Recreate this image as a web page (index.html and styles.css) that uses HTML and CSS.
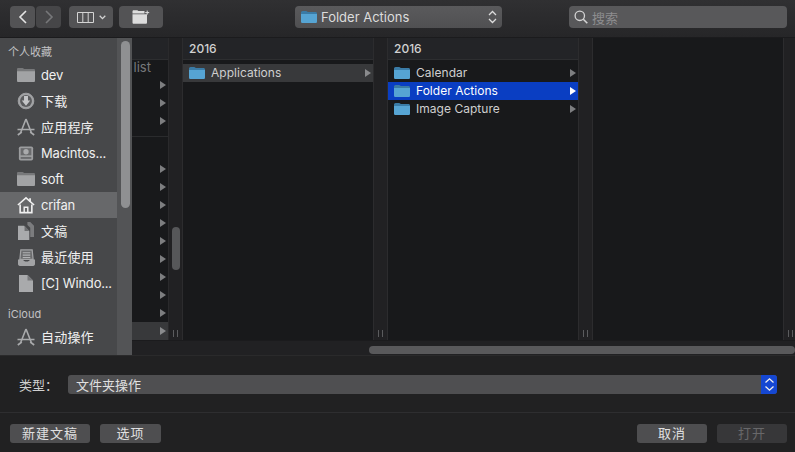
FILE: index.html
```html
<!DOCTYPE html>
<html lang="zh">
<head>
<meta charset="utf-8">
<title>Open</title>
<link rel="stylesheet" href="styles.css">
</head>
<body>
<svg class="defs" width="0" height="0">
  <symbol id="blue-folder" viewBox="0 0 16 12"><path d="M0 1.800C0 .7.700 0 1.600 0h3.600c.8 0 1 .9 1.800.9h7.400c1 0 1.600.6 1.600 1.500V4H0z" fill="#3a7ba6"/><path d="M0 3h16v7.500c0 1-.6 1.500-1.600 1.500H1.600C.6 12 0 11.500 0 10.500z" fill="#56a4d3"/></symbol>
  <symbol id="gray-folder" viewBox="0 0 18 14"><path d="M0 1.400C0 .5.500 0 1.300 0h4.300c.9 0 .9 1 1.800 1h9.300c.8 0 1.300.5 1.300 1.300V4H0z" fill="#77787a"/><path d="M0 3.200h18v9.500c0 .8-.5 1.300-1.300 1.300H1.300C.5 14 0 13.500 0 12.700z" fill="#a2a3a5"/></symbol>
  <symbol id="apps" viewBox="0 0 18 18"><path d="M9 1 3.500 15M9 1l5.500 14M.5 11.500h17M.8 17l4-3M17.200 17l-4-3" fill="none" stroke="#a9aaac" stroke-width="1.600"/></symbol>
</svg>
<div class="window">
  <header class="toolbar">
    <div class="btn-group">
      <button class="tb nav" aria-label="后退"><svg width="10" height="14" viewBox="0 0 10 14"><path d="M8 1 2 7l6 6" fill="none" stroke="#e4e4e4" stroke-width="1.600"/></svg></button>
      <button class="tb nav off" aria-label="前进"><svg width="10" height="14" viewBox="0 0 10 14"><path d="m2 1 6 6-6 6" fill="none" stroke="#77787a" stroke-width="1.600"/></svg></button>
    </div>
    <button class="tb view" aria-label="显示"><svg width="17" height="11" viewBox="0 0 17 11"><path d="M.5.500h16v10H.5zM5.800.500v10M11.200.500v10" fill="none" stroke="#d4d4d4"/></svg><svg width="7" height="5" viewBox="0 0 7 5"><path d="m.7.800 2.800 2.800L6.300.800" fill="none" stroke="#d4d4d4" stroke-width="1.300"/></svg></button>
    <button class="tb newf" aria-label="新建文件夹"><svg width="18" height="14" viewBox="0 0 18 14"><path d="M.5 1.500C.5.700 1 .300 1.600.300h3.600c.8 0 .9.800 1.700.800h5.600v2.400H.5zM.5 4.300h14.500v8.200c0 .8-.5 1.300-1.200 1.300H1.700c-.7 0-1.200-.5-1.200-1.300z" fill="#dcdcdc"/><path d="M15.200.6v4M13.200 2.600h4" stroke="#dcdcdc" stroke-width="1"/></svg></button>
    <div class="path">
      <svg class="pf" width="16" height="12"><use href="#blue-folder"/></svg>
      <span class="path-label">Folder Actions</span>
      <svg class="updown" width="9" height="14" viewBox="0 0 9 14"><path d="M1 5l3.500-3.500L8 5M1 9l3.500 3.500L8 9" fill="none" stroke="#dcdcdc" stroke-width="1.300"/></svg>
    </div>
    <div class="search">
      <svg width="14" height="14" viewBox="0 0 14 14"><circle cx="5.800" cy="5.800" r="4.700" fill="none" stroke="#d4d4d4" stroke-width="1.300"/><path d="m9.300 9.300 4 4" stroke="#d4d4d4" stroke-width="1.600"/></svg>
      <span>搜索</span>
    </div>
  </header>

  <main class="main">
    <nav class="sidebar">
      <div class="side-list">
        <div class="side-head">个人收藏</div>
        <div class="side-item"><svg width="18" height="14"><use href="#gray-folder"/></svg><span>dev</span></div>
        <div class="side-item"><svg width="18" height="18" viewBox="0 0 20 20"><circle cx="10" cy="10" r="8.700" fill="#a2a3a5" stroke="#a2a3a5"/><circle cx="10" cy="10" r="6.600" fill="#5b5c5e"/><path d="M7.800 4.500h4.400v5h2.500L10 15.200 5.300 9.500h2.500z" fill="#c4c5c7"/></svg><span class="cjk">下载</span></div>
        <div class="side-item"><svg width="18" height="18"><use href="#apps"/></svg><span class="cjk">应用程序</span></div>
        <div class="side-item"><svg width="16" height="17" viewBox="0 0 18 18"><rect x="1" y="1" width="16" height="16" rx="2" fill="#9c9d9f"/><rect x="3" y="3" width="12" height="8" fill="#6a6b6d"/><circle cx="9" cy="7" r="3" fill="#a9aaac"/><path d="M3 14h12" stroke="#68696b" stroke-width="2"/></svg><span>Macintos...</span></div>
        <div class="side-item"><svg width="18" height="14"><use href="#gray-folder"/></svg><span>soft</span></div>
        <div class="side-item sel"><svg width="18" height="18" viewBox="0 0 20 19"><path d="M1 9.500 10 1.500l9 8" fill="none" stroke="#f0f0f0" stroke-width="1.800"/><path d="M14.500 2v4" stroke="#f0f0f0" stroke-width="2"/><path d="M3.500 9v9h13V9" fill="none" stroke="#f0f0f0" stroke-width="1.800"/><path d="M8 18v-6h4v6" fill="none" stroke="#f0f0f0" stroke-width="1.600"/></svg><span>crifan</span></div>
        <div class="side-item"><svg width="16" height="18" viewBox="0 0 17 19"><path d="M10 0h3l4 4v12h-4V6L10 3z" fill="#7b7c7e"/><path d="M0 4h6.500L12 9.500V19H0z" fill="#a9aaac"/><path d="M7 4v5.500h5" fill="#6e6f71"/></svg><span class="cjk">文稿</span></div>
        <div class="side-item"><svg width="17" height="17" viewBox="0 0 18 18"><path d="M3 1h12l1 10H2z" fill="#6b6c6e" stroke="#a2a3a5" stroke-width="1.300"/><path d="M5 4h8M5 6.500h8M5 9h8" stroke="#b2b3b5" stroke-width="1.200"/><path d="M0 11h5.500c0 3 7 3 7 0H18v5c0 1-.7 2-2 2H2c-1.300 0-2-1-2-2z" fill="#a2a3a5"/></svg><span class="cjk">最近使用</span></div>
        <div class="side-item"><svg width="14" height="17" viewBox="0 0 14 17"><path d="M0 0h8.500L14 5.500V17H0z" fill="#a9aaac"/><path d="M8.500 0v5.500H14" fill="#78797b"/></svg><span>[C] Windo...</span></div>
        <div class="side-head cloud">iCloud</div>
        <div class="side-item"><svg width="18" height="18"><use href="#apps"/></svg><span class="cjk">自动操作</span></div>
      </div>
      <div class="side-scroll"><div class="side-thumb"></div></div>
    </nav>

    <section class="browser">
      <div class="columns">
        <div class="col first">
          <div class="col-head"></div>
          <div class="col-list">
            <div class="row short"><span class="cut">list</span></div>
            <div class="row"><i class="arrow"></i></div>
            <div class="row"><i class="arrow"></i></div>
            <div class="row"><i class="arrow"></i></div>
            <div class="gap"></div>
            <div class="row"><i class="arrow"></i></div>
            <div class="row"><i class="arrow"></i></div>
            <div class="row"><i class="arrow"></i></div>
            <div class="row"><i class="arrow"></i></div>
            <div class="row"><i class="arrow"></i></div>
            <div class="row"><i class="arrow"></i></div>
            <div class="row"><i class="arrow"></i></div>
            <div class="row"><i class="arrow"></i></div>
            <div class="row"><i class="arrow"></i></div>
            <div class="row inactive"><i class="arrow"></i></div>
          </div>
        </div>
        <div class="gutter first-gutter"><div class="mini-thumb"></div><span class="grip"></span></div>
        <div class="col">
          <div class="col-head">2016</div>
          <div class="col-list pad">
            <div class="row inactive"><svg width="16" height="12"><use href="#blue-folder"/></svg><span class="name">Applications</span><i class="arrow"></i></div>
          </div>
        </div>
        <div class="gutter"><span class="grip"></span></div>
        <div class="col">
          <div class="col-head">2016</div>
          <div class="col-list pad">
            <div class="row"><svg width="16" height="12"><use href="#blue-folder"/></svg><span class="name">Calendar</span><i class="arrow"></i></div>
            <div class="row active"><svg width="16" height="12"><use href="#blue-folder"/></svg><span class="name">Folder Actions</span><i class="arrow"></i></div>
            <div class="row"><svg width="16" height="12"><use href="#blue-folder"/></svg><span class="name">Image Capture</span><i class="arrow"></i></div>
          </div>
        </div>
        <div class="gutter"><span class="grip"></span></div>
        <div class="col empty"></div>
        <div class="gutter last"><span class="grip"></span></div>
      </div>
      <div class="h-scroll"><div class="h-thumb"></div></div>
    </section>
  </main>

  <div class="type-bar">
    <label class="type-label">类型：</label>
    <div class="type-select"><span>文件夹操作</span><div class="stepper"><svg width="11" height="15" viewBox="0 0 11 15"><path d="M1.500 5.500 5.500 1.800l4 3.700M1.500 9.500l4 3.700 4-3.700" fill="none" stroke="#f0f0f0" stroke-width="1.300"/></svg></div></div>
  </div>

  <footer class="footer">
    <button class="act wide">新建文稿</button>
    <button class="act opt">选项</button>
    <span class="spacer"></span>
    <button class="act cancel">取消</button>
    <button class="act open" disabled>打开</button>
  </footer>
</div>
</body>
</html>
```

FILE: styles.css
```css
* { box-sizing: border-box; }
html, body { margin: 0; padding: 0; }
body {
  width: 795px; height: 452px; overflow: hidden; background: #212122;
  font-family: Inter, "Noto Sans CJK SC", sans-serif; font-size: 13px; color: #d6d6d6;
}
.defs { display: block; height: 0; }
svg { display: block; flex: none; }
.window { display: flex; flex-direction: column; height: 452px; }

.toolbar {
  height: 38px; flex: none; display: flex; align-items: flex-start; padding: 6px 8px 0 10px;
  background: linear-gradient(#303032, #262628); border-bottom: 1px solid #1b1b1d;
}
button { font: inherit; color: inherit; padding: 0; }
.tb {
  height: 22px; display: flex; align-items: center; justify-content: center;
  background: #535355; border: 0; border-radius: 4px;
}
.btn-group { display: flex; gap: 1px; }
.nav { width: 25px; }
.nav.off { background: #464648; }
.view { width: 44px; margin-left: 8px; gap: 5px; padding-top: 1px; }
.newf { width: 44px; margin-left: 6px; }
.path {
  width: 207px; height: 22px; margin-left: 132px; display: flex; align-items: center;
  padding: 0 5px 0 6px; background: linear-gradient(#5a5a5c, #505052); border-radius: 4px;
}
.path-label { margin-left: 4px; flex: 1; color: #dcdcdc; line-height: 22px; }
.search {
  width: 218px; height: 22px; margin-left: 67px; display: flex; align-items: center; gap: 4px;
  padding: 0 5px; background: #58585a; border-radius: 4px; color: #8d8d8f;
}

.main { height: 318px; flex: none; display: flex; border-bottom: 1px solid #2a2a2b; }
.sidebar { width: 132px; flex: none; display: flex; background: #47484a; overflow: hidden; }
.side-list { width: 117px; flex: none; padding-top: 5px; }
.side-head { height: 19px; padding-left: 8px; font-size: 11px; line-height: 18px; color: #c2c2c4; }
.side-head.cloud { margin-top: 9px; }
.side-item {
  height: 26px; display: grid; grid-template-columns: 18px 1fr; column-gap: 6px; justify-items: center;
  align-items: center; padding-left: 17px; color: #f0f0f0; white-space: nowrap; letter-spacing: -.2px;
}
.side-item span { justify-self: start; }
.side-item .cjk { padding-bottom: 2px; letter-spacing: .2px; }
.side-item.sel { background: #67686a; }
.side-scroll { width: 15px; flex: none; background: #535456; padding: 3px 2px 0 4px; }
.side-thumb { width: 9px; height: 167px; border-radius: 5px; background: #8f9092; }

.browser { flex: 1; display: flex; flex-direction: column; background: #212123; }
.columns { height: 302px; flex: none; display: flex; }
.col { width: 190px; flex: none; display: flex; flex-direction: column; background: #18191b; }
.col.first { width: 36px; }
.col-head {
  height: 22px; flex: none; background: #232427; border-bottom: 1px solid #2d2e30; padding-left: 6px;
  font-size: 12px; font-weight: 500; line-height: 21px; color: #d2d2d2;
}
.col-list { flex: 1; overflow: hidden; }
.col-list.pad { padding-top: 4px; }
.row { height: 18px; display: flex; align-items: center; padding: 0 2px 0 6px; position: relative; color: #cfcfcf; font-size: 12px; letter-spacing: .03px; }
.row .name { margin-left: 6px; flex: 1; white-space: nowrap; padding-bottom: 1px; }
.row.short { height: 16px; }
.cut { position: absolute; right: 17px; top: -1px; color: #77787a; font-size: 13px; line-height: 16px; }
.gap { border-top: 1px solid #2a2b2d; margin-top: 6px; height: 24px; }
.first .row { justify-content: flex-end; }
.arrow {
  display: block; width: 0; height: 0; flex: none;
  border-left: 6px solid #7d7e80; border-top: 4px solid transparent; border-bottom: 4px solid transparent;
}
.row.inactive { background: #38393b; }
.row.inactive .arrow { border-left-color: #8a8b8d; }
.row.active { background: #0a3ec2; color: #fff; }
.row.active .arrow { border-left-color: #fff; }
.gutter {
  width: 15px; flex: none; position: relative; background: #212123;
  border-left: 1px solid #2c2c2e; border-right: 1px solid #2c2c2e;
}
.gutter.last { width: 12px; border-right: 0; }
.first-gutter { border-left-color: #2a2a2c; }
.grip {
  position: absolute; left: 4px; bottom: 3px; width: 5px; height: 7px;
  border-left: 1px solid #5b5c5e; border-right: 1px solid #5b5c5e;
}
.mini-thumb { position: absolute; left: 3px; top: 189px; width: 8px; height: 43px; border-radius: 4px; background: #565759; }
.h-scroll { height: 15px; flex: none; padding: 5px 0 0 237px; background: #212123; border-top: 1px solid #1b1b1d; }
.h-thumb { height: 8px; border-radius: 4px; background: #59595b; }

.type-bar { height: 57px; flex: none; display: flex; align-items: center; padding: 1px 18px 0 19px; border-bottom: 1px solid #2e2e30; background: #212122; }
.type-label { width: 49px; flex: none; color: #d0d0d0; }
.type-select {
  flex: 1; height: 19px; display: flex; align-items: center; padding-left: 8px; border-radius: 3px;
  background: #4f4f51; color: #e0e0e0; overflow: hidden;
}
.type-select span { flex: 1; }
.stepper { width: 16px; height: 19px; display: flex; align-items: center; justify-content: center; background: #1547d2; }

.footer { flex: 1; display: flex; align-items: flex-start; padding: 11px 8px 0 10px; background: #212122; gap: 10px; }
.act { height: 19px; border: 0; border-radius: 3px; background: #4e4e50; color: #e0e0e0; line-height: 19px; letter-spacing: 1px; }
.wide { width: 80px; }
.opt { width: 61px; }
.spacer { flex: 1; }
.cancel { width: 70px; }
.open { width: 70px; background: #373739; color: #68686a; }
```
